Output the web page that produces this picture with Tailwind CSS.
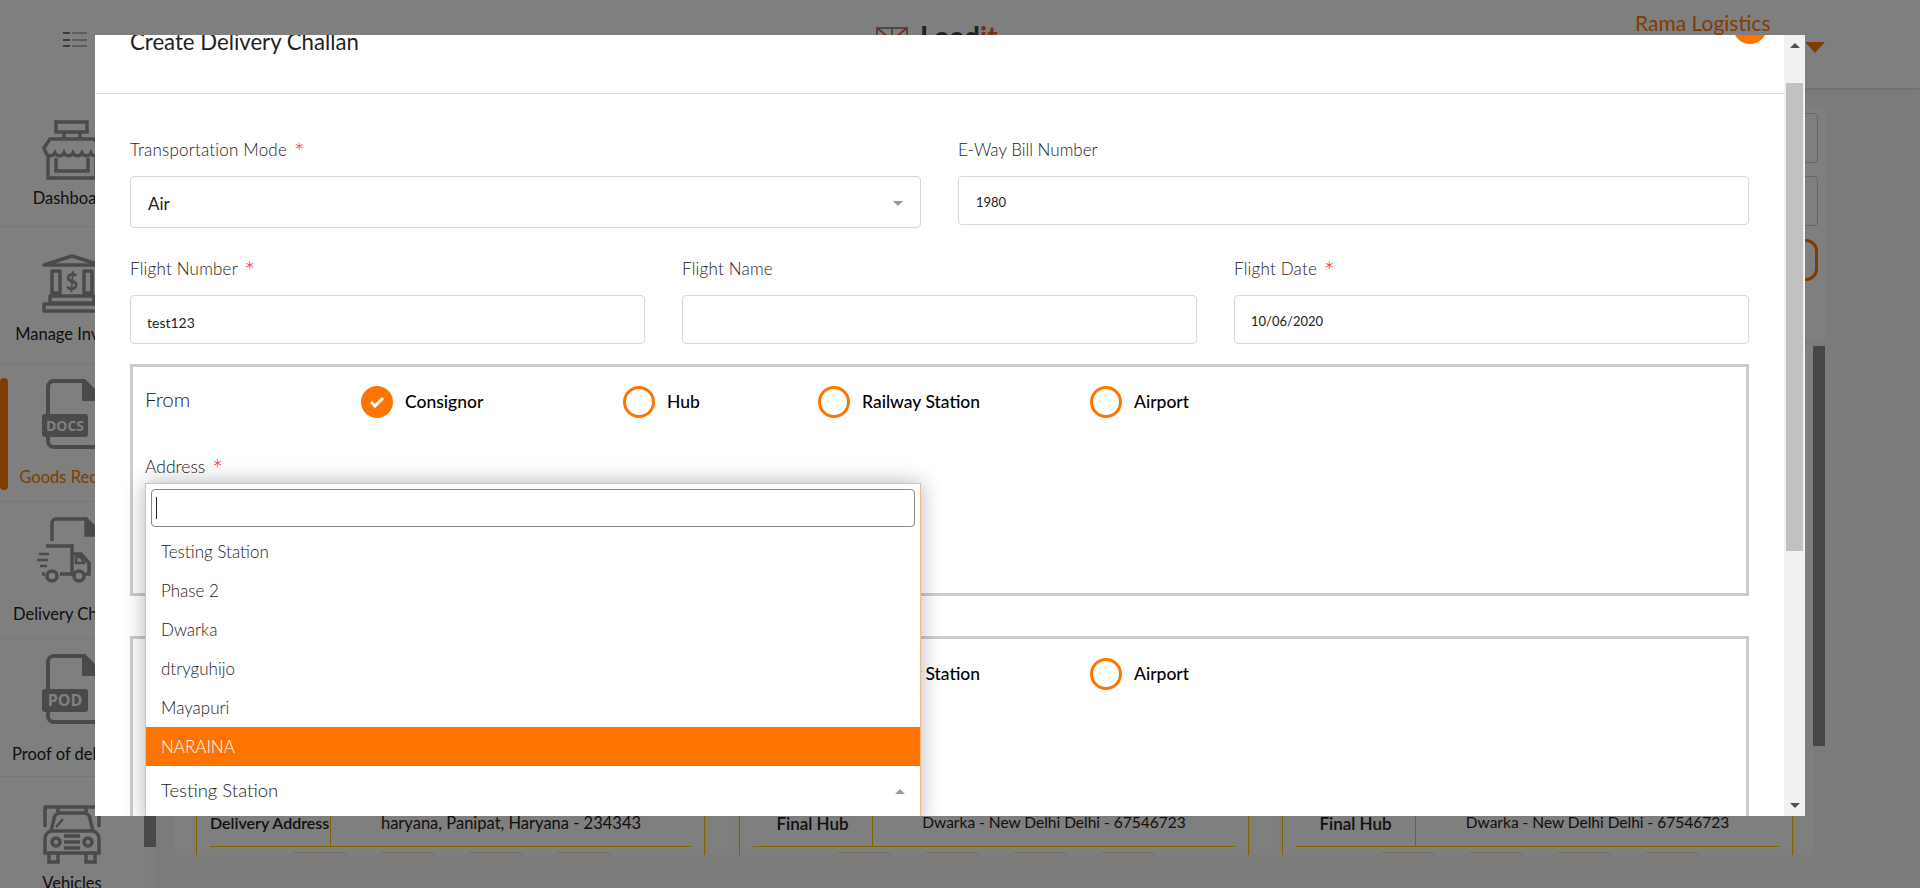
<!DOCTYPE html>
<html lang="en">

<head>
    <meta charset="UTF-8">
    <title>Create Delivery Challan</title>
    <script src="https://cdn.jsdelivr.net/npm/@tailwindcss/browser@4"></script>
</head>

<body class="h-[888px] overflow-hidden bg-[#f6f6f6] font-['Lato',sans-serif] text-[#222]">
    <!-- page behind the modal -->
    <header class="h-[88px] bg-white shadow-sm flex relative">
        <div class="ml-[63px] mt-[32px] w-[24px] h-[15px] flex flex-col justify-between">
            <div class="flex gap-[2px]"><span class="w-[7px] h-[2px] bg-[#777]"></span><span class="w-[15px] h-[2px] bg-[#bbb]"></span></div>
            <div class="flex gap-[2px]"><span class="w-[7px] h-[2px] bg-[#777]"></span><span class="w-[15px] h-[2px] bg-[#bbb]"></span></div>
            <div class="flex gap-[2px]"><span class="w-[7px] h-[2px] bg-[#777]"></span><span class="w-[15px] h-[2px] bg-[#bbb]"></span></div>
        </div>
        <div class="absolute left-[876px] top-[22px] flex items-start gap-[12px] text-[28px] font-bold leading-none">
            <svg class="mt-[5px]" width="32" height="24" viewBox="0 0 32 24" fill="none" stroke-width="2"><path d="M0 1h32M16 1v12M1 1v22M31 1v22" stroke="#999"/><path d="M1 1l15 12L31 1" stroke="#e8622c"/></svg>
            <span class="text-[#444]">Load<span class="text-[#e8622c]">it</span></span>
        </div>
        <div class="absolute left-[1635px] top-[7px] text-[21px] text-[#ff7a00]">Rama Logistics</div>
        <div class="absolute left-[1805px] top-[42px] w-0 h-0 border-x-[10px] border-x-transparent border-t-[11px] border-t-[#ff7a00]"></div>
    </header>

    <div class="flex h-[800px]">
        <aside class="w-[144px] bg-white relative shrink-0 h-[800px]">
            <div class="absolute left-0 top-[290px] w-[8px] h-[112px] rounded-full bg-[#ff7a00]"></div>
            <a class="h-[139px] border-b border-[#eee] flex flex-col items-center pt-[32px]">
                <svg width="72" height="60" viewBox="0 0 72 60" fill="none" stroke="#949494" stroke-width="3.5"><path d="M20 2h31v10H20zM28 12v7M44 12v7M14 19h44l8 9-2 5a5 5 0 0 1-9 0 5 5 0 0 1-9 0 5 5 0 0 1-9 0 5 5 0 0 1-9 0 5 5 0 0 1-9 0 5 5 0 0 1-9 0l-2-5zM12 34v24h48V34M20 38v13h32V38"/></svg>
                <span class="mt-[6px] text-[16.5px]">Dashboard</span>
            </a>
            <a class="h-[137px] border-b border-[#eee] flex flex-col items-center pt-[27px]">
                <svg width="72" height="60" viewBox="0 0 72 60" fill="none" stroke="#949494" stroke-width="3.5"><path d="M8 11L36 2l28 9zM16 17v22h8V17zM48 17v22h8V17zM14 42h44v7H14zM8 50h56v7H8z" stroke-linejoin="round"/><text x="36" y="36" text-anchor="middle" font-size="22" font-weight="700" fill="#949494" stroke="none">$</text></svg>
                <span class="mt-[8px] text-[16.5px]">Manage Invoice</span>
            </a>
            <a class="h-[138px] border-b border-[#eee] flex flex-col items-center pt-[15px]">
                <svg width="72" height="72" viewBox="0 0 72 72" fill="none" stroke="#949494" stroke-width="4"><path d="M12 36V8a6 6 0 0 1 6-6h30l18 18v44a4 4 0 0 1-4 4H18a6 6 0 0 1-6-6v-4"/><path d="M48 2v18h18z" fill="#949494"/><rect x="6" y="35" width="46" height="23" rx="3" fill="#949494" stroke="none"/><text x="29" y="52" text-anchor="middle" font-family="Open Sans" font-size="14" font-weight="700" fill="#fff" stroke="none">DOCS</text></svg>
                <span class="mt-[14px] text-[16.5px] text-[#ff7a00]">Goods Receipt</span>
            </a>
            <a class="h-[137px] border-b border-[#eee] flex flex-col items-center pt-[15px]">
                <svg width="72" height="72" viewBox="0 0 72 72" fill="none" stroke="#949494" stroke-width="3.5"><path d="M16 24V6a4 4 0 0 1 4-4h30l16 16v12"/><path d="M50 2v16h16z" fill="#949494"/><path d="M10 29h26v28H24M36 37h9l8 9v11h-4M36 57h2M6 57h3"/><path d="M40 40h5l3 6h-8z" stroke-width="2.5"/><circle cx="16" cy="59" r="5"/><circle cx="43" cy="59" r="5"/><path d="M3 37h10M1 43h11M4 49h7" stroke-width="2.5"/></svg>
                <span class="mt-[13px] text-[16.5px]">Delivery Challan</span>
            </a>
            <a class="h-[138px] border-b border-[#eee] flex flex-col items-center pt-[15px]">
                <svg width="72" height="72" viewBox="0 0 72 72" fill="none" stroke="#949494" stroke-width="4"><path d="M12 36V8a6 6 0 0 1 6-6h30l18 18v44a4 4 0 0 1-4 4H18a6 6 0 0 1-6-6v-4"/><path d="M48 2v18h18z" fill="#949494"/><rect x="6" y="35" width="46" height="23" rx="3" fill="#949494" stroke="none"/><text x="29" y="52" text-anchor="middle" font-family="Open Sans" font-size="16" font-weight="700" fill="#fff" stroke="none">POD</text></svg>
                <span class="mt-[16px] text-[16.5px]">Proof of delivery</span>
            </a>
            <a class="flex flex-col items-center pt-[28px]">
                <svg width="60" height="60" viewBox="0 0 60 60" fill="none" stroke="#949494" stroke-width="3.5"><path d="M2 2h56M3 2v20M57 2v20M16 2v6M44 2v6M9 26l3-12a6 6 0 0 1 6-6h24a6 6 0 0 1 6 6l3 12M9 26a8 8 0 0 0-6 8v14h54V34a8 8 0 0 0-6-8zM7 48v9h9v-9M44 48v9h9v-9M22 31h16M22 37h16M22 43h16"/><path d="M14 22l7-8" stroke-width="2.5"/><circle cx="14" cy="37" r="4"/><circle cx="46" cy="37" r="4"/></svg>
                <span class="mt-[6px] text-[16.5px]">Vehicles</span>
            </a>
        </aside>
        <!-- sidebar scrollbar -->
        <div class="w-[12px] h-[800px] bg-[#fafafa] shrink-0"><div class="h-[759px] bg-[#929292]"></div></div>
        <main class="w-[1638px] ml-[19px] h-[749px] flex flex-col mt-[18px]">
            <div class="w-[1650px] h-[234px] bg-white flex flex-col items-end gap-[13px] pt-[7px] pr-[7px]">
                <div class="w-[300px] h-[50px] border border-[#ccc] rounded-sm"></div>
                <div class="w-[300px] h-[50px] border border-[#ccc] rounded-sm"></div>
                <div class="w-[300px] h-[42px] border-[3px] border-[#ff7a00] rounded-xl"></div>
            </div>
            <div class="mt-[6px] flex-1 flex gap-[33px] pl-[21px] items-end bg-white overflow-hidden">
                <div class="w-[509px] h-[100px] border-x border-[#ffcc00] shadow-[0_0_6px_rgba(255,204,0,0.3)] flex flex-col justify-end px-[13px]">
                    <div class="flex h-[40px] border-b border-[#ffcc00] text-[#222]"><b class="w-[121px] border-r border-[#ffcc00] font-semibold pt-[4px] text-[16px]">Delivery Address</b><span class="flex-1 text-center pt-[4px] text-[16.5px]">haryana, Panipat, Haryana - 234343</span></div>
                    <div class="h-[8px] pt-[5px] flex justify-center gap-[30px]"><span class="w-[58px] h-[6px] border border-[#fbd9b5] rounded-t-lg"></span><span class="w-[58px] h-[6px] border border-[#fbd9b5] rounded-t-lg"></span><span class="w-[58px] h-[6px] border border-[#fbd9b5] rounded-t-lg"></span><span class="w-[58px] h-[6px] border border-[#fbd9b5] rounded-t-lg"></span></div>
                </div>
                <div class="w-[510px] ml-[1px] h-[100px] border-x border-[#ffcc00] shadow-[0_0_6px_rgba(255,204,0,0.3)] flex flex-col justify-end px-[13px]">
                    <div class="flex h-[40px] border-b border-[#ffcc00] text-[#222]"><b class="w-[120px] border-r border-[#ffcc00] font-semibold text-center pt-[4px] text-[17px]">Final Hub</b><span class="flex-1 text-center pt-[4px] text-[15.5px]">Dwarka - New Delhi Delhi - 67546723</span></div>
                    <div class="h-[8px] pt-[5px] flex justify-center gap-[30px]"><span class="w-[58px] h-[6px] border border-[#fbd9b5] rounded-t-lg"></span><span class="w-[58px] h-[6px] border border-[#fbd9b5] rounded-t-lg"></span><span class="w-[58px] h-[6px] border border-[#fbd9b5] rounded-t-lg"></span><span class="w-[58px] h-[6px] border border-[#fbd9b5] rounded-t-lg"></span></div>
                </div>
                <div class="w-[511px] h-[100px] border-x border-[#ffcc00] shadow-[0_0_6px_rgba(255,204,0,0.3)] flex flex-col justify-end px-[13px]">
                    <div class="flex h-[40px] border-b border-[#ffcc00] text-[#222]"><b class="w-[120px] border-r border-[#ffcc00] font-semibold text-center pt-[4px] text-[17px]">Final Hub</b><span class="flex-1 text-center pt-[4px] text-[15.5px]">Dwarka - New Delhi Delhi - 67546723</span></div>
                    <div class="h-[8px] pt-[5px] flex justify-center gap-[30px]"><span class="w-[58px] h-[6px] border border-[#fbd9b5] rounded-t-lg"></span><span class="w-[58px] h-[6px] border border-[#fbd9b5] rounded-t-lg"></span><span class="w-[58px] h-[6px] border border-[#fbd9b5] rounded-t-lg"></span><span class="w-[58px] h-[6px] border border-[#fbd9b5] rounded-t-lg"></span></div>
                </div>
            </div>
        </main>
        <div class="absolute left-[1813px] top-[346px] w-[12px] h-[400px] bg-[#8c8c8c]"></div>
    </div>

    <!-- overlay -->
    <div class="fixed inset-0 bg-black/50"></div>

    <!-- modal -->
    <div class="fixed left-[95px] top-[35px] w-[1710px] h-[781px] bg-white overflow-hidden flex">
        <div class="w-[1689px] shrink-0 relative">
            <div class="h-[59px] border-b border-[#ddd] pl-[35px] flex items-start">
                <h4 class="text-[22.2px] leading-none -mt-[4px] text-[#222]">Create Delivery Challan</h4>
                <div class="absolute left-[1638px] -top-[25px] w-[34px] h-[34px] rounded-full bg-[#ff7300]"></div>
            </div>

            <div class="pl-[35px] pr-[35px] pt-[45px] text-[#222] font-light">
                <div class="grid grid-cols-2 gap-x-[37px]">
                    <div>
                        <label class="block h-[22px] text-[17px] tracking-[0.2px] leading-[22px] mb-[15px]">Transportation Mode <span class="relative top-[6px] text-red-500 text-[26px] leading-[0] ml-[2px]">*</span></label>
                        <div class="h-[52px] border border-[#d8d8d8] rounded-sm flex items-center justify-between pl-[17px] pr-[17px] pt-[3px] text-[17px] text-[#222] font-normal">Air
                            <span class="w-0 h-0 border-x-[5px] border-x-transparent border-t-[5px] border-t-[#999]"></span>
                        </div>
                    </div>
                    <div>
                        <label class="block h-[22px] text-[17px] leading-[22px] mb-[15px]">E-Way Bill Number</label>
                        <div class="h-[49px] border border-[#d8d8d8] rounded-sm flex items-center px-[17px] pt-[5px] text-[13px] text-[#222] font-normal">1980</div>
                    </div>
                </div>
                <div class="grid grid-cols-3 gap-x-[37px] mt-[30px]">
                    <div>
                        <label class="block h-[22px] text-[17px] tracking-[0.2px] leading-[22px] mb-[15px]">Flight Number <span class="relative top-[6px] text-red-500 text-[26px] leading-[0] ml-[2px]">*</span></label>
                        <div class="h-[49px] border border-[#d8d8d8] rounded-sm flex items-center px-[16px] pt-[5px] text-[14px] text-[#222] font-normal">test123</div>
                    </div>
                    <div>
                        <label class="block h-[22px] text-[17px] tracking-[0.2px] leading-[22px] mb-[15px]">Flight Name</label>
                        <div class="h-[49px] border border-[#d8d8d8] rounded-sm"></div>
                    </div>
                    <div>
                        <label class="block h-[22px] text-[17px] tracking-[0.2px] leading-[22px] mb-[15px]">Flight Date <span class="relative top-[6px] text-red-500 text-[26px] leading-[0] ml-[2px]">*</span></label>
                        <div class="h-[49px] border border-[#d8d8d8] rounded-sm flex items-center px-[16px] pt-[5px] text-[13px] text-[#222] font-normal">10/06/2020</div>
                    </div>
                </div>

                <div class="mt-[20px] h-[232px] border-[3px] border-[#ccc] pl-[12px] pt-[19px]">
                    <div class="flex items-center h-[32px] relative">
                        <span class="w-[216px] text-[20.5px] -mt-[6px]">From</span>
                        <div class="w-[262px] flex items-center gap-[12px] font-medium text-[17.5px] text-black">
                            <span class="w-[32px] h-[32px] rounded-full bg-[#ff7300] flex items-center justify-center">
                                <svg width="16" height="12" viewBox="0 0 16 12" fill="none" stroke="#fff" stroke-width="3"><path d="M2 6l4 4 8-8"/></svg>
                            </span>Consignor
                        </div>
                        <div class="w-[195px] flex items-center gap-[12px] font-medium text-[17.5px] text-black"><span class="w-[32px] h-[32px] rounded-full border-[3px] border-[#ff7300]"></span>Hub</div>
                        <div class="w-[272px] flex items-center gap-[12px] font-medium text-[17.5px] text-black"><span class="w-[32px] h-[32px] rounded-full border-[3px] border-[#ff7300]"></span>Railway Station</div>
                        <div class="flex items-center gap-[12px] font-medium text-[17.5px] text-black"><span class="w-[32px] h-[32px] rounded-full border-[3px] border-[#ff7300]"></span>Airport</div>
                    </div>
                    <label class="block h-[22px] text-[17.5px] leading-[22px] mt-[38px]">Address <span class="relative top-[6px] text-red-500 text-[26px] leading-[0] ml-[2px]">*</span></label>
                </div>

                <!-- left part of this row sits under the open dropdown -->
                <div class="mt-[40px] h-[300px] border-[3px] border-[#ccc] pl-[685px] pt-[19px]">
                    <div class="flex items-center h-[32px]">
                        <div class="w-[272px] flex items-center gap-[12px] font-medium text-[17.5px] text-black"><span class="w-[32px] h-[32px] rounded-full border-[3px] border-[#ff7300]"></span>Railway Station</div>
                        <div class="flex items-center gap-[12px] font-medium text-[17.5px] text-black"><span class="w-[32px] h-[32px] rounded-full border-[3px] border-[#ff7300]"></span>Airport</div>
                    </div>
                </div>
            </div>

            <!-- open address dropdown -->
            <div class="absolute left-[50px] top-[448px] w-[776px] h-[340px] bg-white border-x border-t border-[#f3b98a] shadow-[0_0_20px_rgba(0,0,0,0.3)] text-[#222] font-light">
                <div class="p-[5px]">
                    <div class="h-[38px] border border-[#888] rounded-sm flex items-center pl-[4px]"><span class="w-px h-[22px] bg-[#222]"></span></div>
                </div>
                <ul class="text-[17px]">
                    <li class="h-[39px] flex items-center px-[15px]">Testing Station</li>
                    <li class="h-[39px] flex items-center px-[15px]">Phase 2</li>
                    <li class="h-[39px] flex items-center px-[15px]">Dwarka</li>
                    <li class="h-[39px] flex items-center px-[15px]">dtryguhijo</li>
                    <li class="h-[39px] flex items-center px-[15px]">Mayapuri</li>
                    <li class="h-[39px] flex items-center px-[15px] bg-[#ff7300] text-white">NARAINA</li>
                </ul>
                <div class="h-[50px] flex items-center justify-between px-[15px] text-[18.5px]">Testing Station
                    <span class="w-0 h-0 border-x-[5px] border-x-transparent border-b-[5px] border-b-[#999]"></span>
                </div>
            </div>
        </div>

        <!-- modal scrollbar -->
        <div class="w-[21px] bg-[#f1f1f1] flex flex-col items-center relative">
            <span class="mt-[8px] w-0 h-0 border-x-[5px] border-x-transparent border-b-[5px] border-b-[#505050]"></span>
            <div class="absolute left-[2px] top-[48px] w-[17px] h-[468px] bg-[#c1c1c1]"></div>
            <span class="absolute bottom-[8px] w-0 h-0 border-x-[5px] border-x-transparent border-t-[5px] border-t-[#505050]"></span>
        </div>
    </div>
</body>

</html>
